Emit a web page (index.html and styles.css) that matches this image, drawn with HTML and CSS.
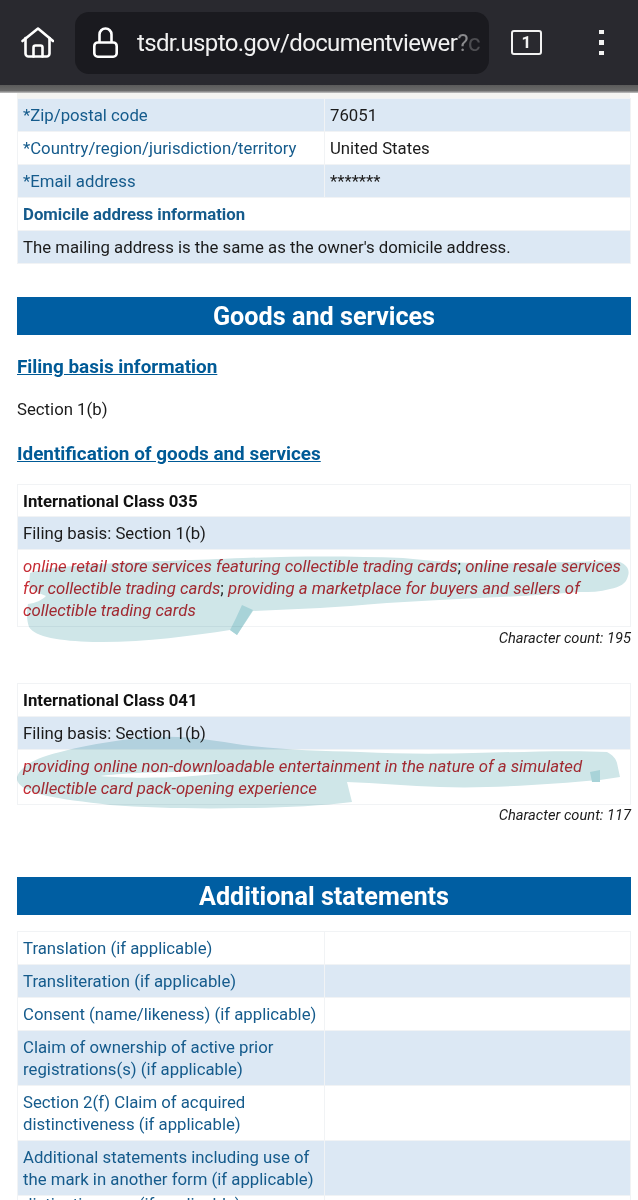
FILE: index.html
```html
<!DOCTYPE html>
<html lang="en">
<head>
<meta charset="utf-8">
<title>TSDR document viewer</title>
<link rel="stylesheet" href="styles.css">
</head>
<body>
<header class="toolbar">
  <svg class="icon-home" viewBox="0 0 33 31" fill="none" stroke="#fff" stroke-width="2.6" stroke-linejoin="round" stroke-linecap="round"><path d="M1.500 14 17 1.500 32 14"/><path d="M4.500 11v15.500a3 3 0 0 0 3 3h18a3 3 0 0 0 3-3V11"/><path d="M12.500 29.500V20.500a2 2 0 0 1 2-2h5a2 2 0 0 1 2 2v9"/></svg>
  <div class="urlbar">
    <svg class="icon-lock" viewBox="0 0 25 31" fill="none" stroke="#fff" stroke-width="2.6" stroke-linejoin="round"><path d="M6.500 15.500V7.500a6 6 0 0 1 12 0v8"/><rect x="1.300" y="15.500" width="22.400" height="14.200" rx="3.500"/></svg>
    <span class="url">tsdr.uspto.gov/documentviewer<span class="url-fade">?</span><span class="url-fade-more">c</span></span>
  </div>
  <div class="tabs">1</div>
  <div class="kebab"><i></i><i></i><i></i></div>
</header>
<div class="toolbar-shadow"></div>
<main class="page">
  <div class="sliver"></div>
  <table class="grid">
    <tr class="alt"><td class="label">*Zip/postal code</td><td>76051</td></tr>
    <tr><td class="label">*Country/region/jurisdiction/territory</td><td>United States</td></tr>
    <tr class="alt"><td class="label">*Email address</td><td>*******</td></tr>
    <tr><td class="label strong" colspan="2">Domicile address information</td></tr>
    <tr class="alt"><td colspan="2">The mailing address is the same as the owner's domicile address.</td></tr>
  </table>

  <h2 class="banner banner-first">Goods and services</h2>
  <h3 class="sub sub-first">Filing basis information</h3>
  <p class="plain">Section 1(b)</p>
  <h3 class="sub sub-second">Identification of goods and services</h3>

  <table class="grid class-table class-first">
    <tr><td class="black-strong">International Class 035</td></tr>
    <tr class="alt"><td>Filing basis: Section 1(b)</td></tr>
    <tr><td class="goods"><em>online retail store services featuring collectible trading cards</em>; <em>online resale services for collectible trading cards</em>; <em>providing a marketplace for buyers and sellers of collectible trading cards</em></td></tr>
  </table>
  <p class="count">Character count: 195</p>

  <table class="grid class-table class-second">
    <tr><td class="black-strong">International Class 041</td></tr>
    <tr class="alt"><td>Filing basis: Section 1(b)</td></tr>
    <tr><td class="goods"><em>providing online non-downloadable entertainment in the nature of a simulated collectible card pack-opening experience</em></td></tr>
  </table>
  <p class="count count-second">Character count: 117</p>

  <h2 class="banner banner-second">Additional statements</h2>
  <table class="grid statements">
    <tr><td class="label">Translation (if applicable)</td><td></td></tr>
    <tr class="alt"><td class="label">Transliteration (if applicable)</td><td></td></tr>
    <tr><td class="label">Consent (name/likeness) (if applicable)</td><td></td></tr>
    <tr class="alt"><td class="label">Claim of ownership of active prior registrations(s) (if applicable)</td><td></td></tr>
    <tr><td class="label">Section 2(f) Claim of acquired distinctiveness (if applicable)</td><td></td></tr>
    <tr class="alt"><td class="label">Additional statements including use of the mark in another form (if applicable)</td><td></td></tr>
    <tr class="clipped"><td class="label">distinctiveness (if applicable)</td><td></td></tr>
  </table>
</main>
<svg class="marker" viewBox="0 0 638 1200" aria-hidden="true">
  <path class="ink" d="M30 573C60 563 150 562 243 558C300 556 350 556 403 558C430 561 460 563 487 563C540 564 590 560 620 562C627 565 630 570 628 576C626 584 620 587 610 589C600 592 590 592 580 592C520 597 450 599 387 603C360 605 340 607 320 608L253 611 237 635 230 630C190 636 140 643 93 642C60 641 35 637 29 627C26 618 27 610 28 604C36 603 42 600 46 596 36 592 30 590 29 584Z"/>
  <path class="ink-dark" d="M242 605 253 610 237 635 230 630 236 618Z"/>
  <path class="ink" fill-rule="evenodd" d="M17 777C20 768 30 762 43 757C70 748 120 738 160 737C190 736 215 741 243 745C280 750 320 751 360 752C400 754 440 754 473 753C520 752 570 750 607 752C613 755 616 759 617 763L620 777 600 780C550 784 490 789 440 787C410 786 375 783 347 782L352 802C320 806 280 808 243 808C200 809 150 808 110 805C85 802 60 799 43 795C28 791 16 786 17 777ZM100 776C130 772 190 771 223 773 190 778 130 779 100 776Z"/>
  <path class="ink-dark" d="M590 772 600 770 600 782 592 782Z"/>
</svg>
</body>
</html>
```

FILE: styles.css
```css
html, body {
  margin: 0;
  padding: 0;
}

body {
  width: 638px;
  height: 1200px;
  overflow: hidden;
  position: relative;
  background: #fff;
  font-family: Roboto, "Liberation Sans", sans-serif;
  font-size: 16.75px;
  line-height: 22px;
  color: #1b1b1b;
}

.toolbar {
  height: 85px;
  background: #29292f;
  display: flex;
  align-items: center;
  box-sizing: border-box;
  padding-left: 21px;
}

.toolbar-shadow {
  height: 8px;
  background: linear-gradient(#5a5a5a, #6a6a6a 70%, #c4c4c4);
}

.icon-home {
  width: 33px;
  height: 31px;
  flex: none;
}

.urlbar {
  width: 414px;
  height: 62px;
  margin-left: 21px;
  box-sizing: border-box;
  padding-left: 18px;
  background: #1a1a1f;
  border-radius: 14px;
  display: flex;
  align-items: center;
  overflow: hidden;
  flex: none;
}

.icon-lock {
  width: 25px;
  height: 31px;
  flex: none;
}

.url {
  margin-left: 19px;
  font-size: 24px;
  letter-spacing: -0.65px;
  line-height: 30px;
  color: #f1f1f1;
  white-space: nowrap;
}

.url-fade {
  color: #8a8a8d;
}

.url-fade-more {
  color: #4d4d51;
}

.tabs {
  width: 31px;
  height: 25px;
  margin-left: 22px;
  box-sizing: border-box;
  border: 2.5px solid #f2f2f2;
  border-radius: 3px;
  color: #f2f2f2;
  font-size: 17px;
  font-weight: 700;
  line-height: 20px;
  text-align: center;
  flex: none;
}

.kebab {
  margin-left: 57px;
  display: flex;
  flex-direction: column;
  gap: 6px;
}

.kebab i {
  display: block;
  width: 4.500px;
  height: 4.500px;
  background: #f2f2f2;
}

.page {
  padding: 0 7px 0 17px;
}

.sliver {
  height: 5px;
  width: 613px;
  background: #f4f4f1;
}

.grid {
  width: 614px;
  table-layout: fixed;
  border-collapse: collapse;
}

.grid td {
  box-sizing: border-box;
  height: 33px;
  padding: 5px 5px;
  border: 1px solid #f1f3f5;
  vertical-align: middle;
}

.grid td:first-child {
  width: 307px;
}

.grid td[colspan] {
  width: auto;
}

.alt td {
  background: #dce8f4;
}

.label {
  color: #155b8c;
}

.strong {
  font-weight: 700;
}

.black-strong {
  font-weight: 700;
  color: #111;
}

.class-first tr:first-child td {
  height: 32px;
  padding-top: 5px;
  padding-bottom: 4px;
}

.clipped td {
  padding-top: 0;
  line-height: 16px;
  vertical-align: top;
}

.banner {
  height: 38px;
  margin: 0;
  background: #005ea2;
  color: #fff;
  font-size: 25.2px;
  font-weight: 700;
  line-height: 40px;
  text-align: center;
}

.banner-first {
  margin-top: 33px;
}

.banner-second {
  margin-top: 51px;
}

.sub {
  margin: 0;
  color: #005a96;
  font-size: 18.9px;
  font-weight: 700;
  line-height: 22px;
  text-decoration: underline;
}

.sub-first {
  margin-top: 21px;
}

.sub-second {
  margin-top: 23px;
}

.plain {
  margin: 20px 0 0;
}

.class-table {
  margin-top: 19px;
}

.class-second {
  margin-top: 34px;
}

.goods {
  color: #1b1b1b;
}

.goods em {
  color: #c62d35;
}

.count {
  margin: 0;
  font-size: 14.7px;
  font-style: italic;
  line-height: 22px;
  text-align: right;
}

.count-second {
  margin-top: -1px;
}

.statements {
  margin-top: 16px;
}

.marker {
  position: absolute;
  left: 0;
  top: 0;
  width: 638px;
  height: 1200px;
  mix-blend-mode: multiply;
  pointer-events: none;
}

.ink {
  fill: #cfe6e8;
}

.ink-dark {
  fill: #a8d3d8;
}
```
